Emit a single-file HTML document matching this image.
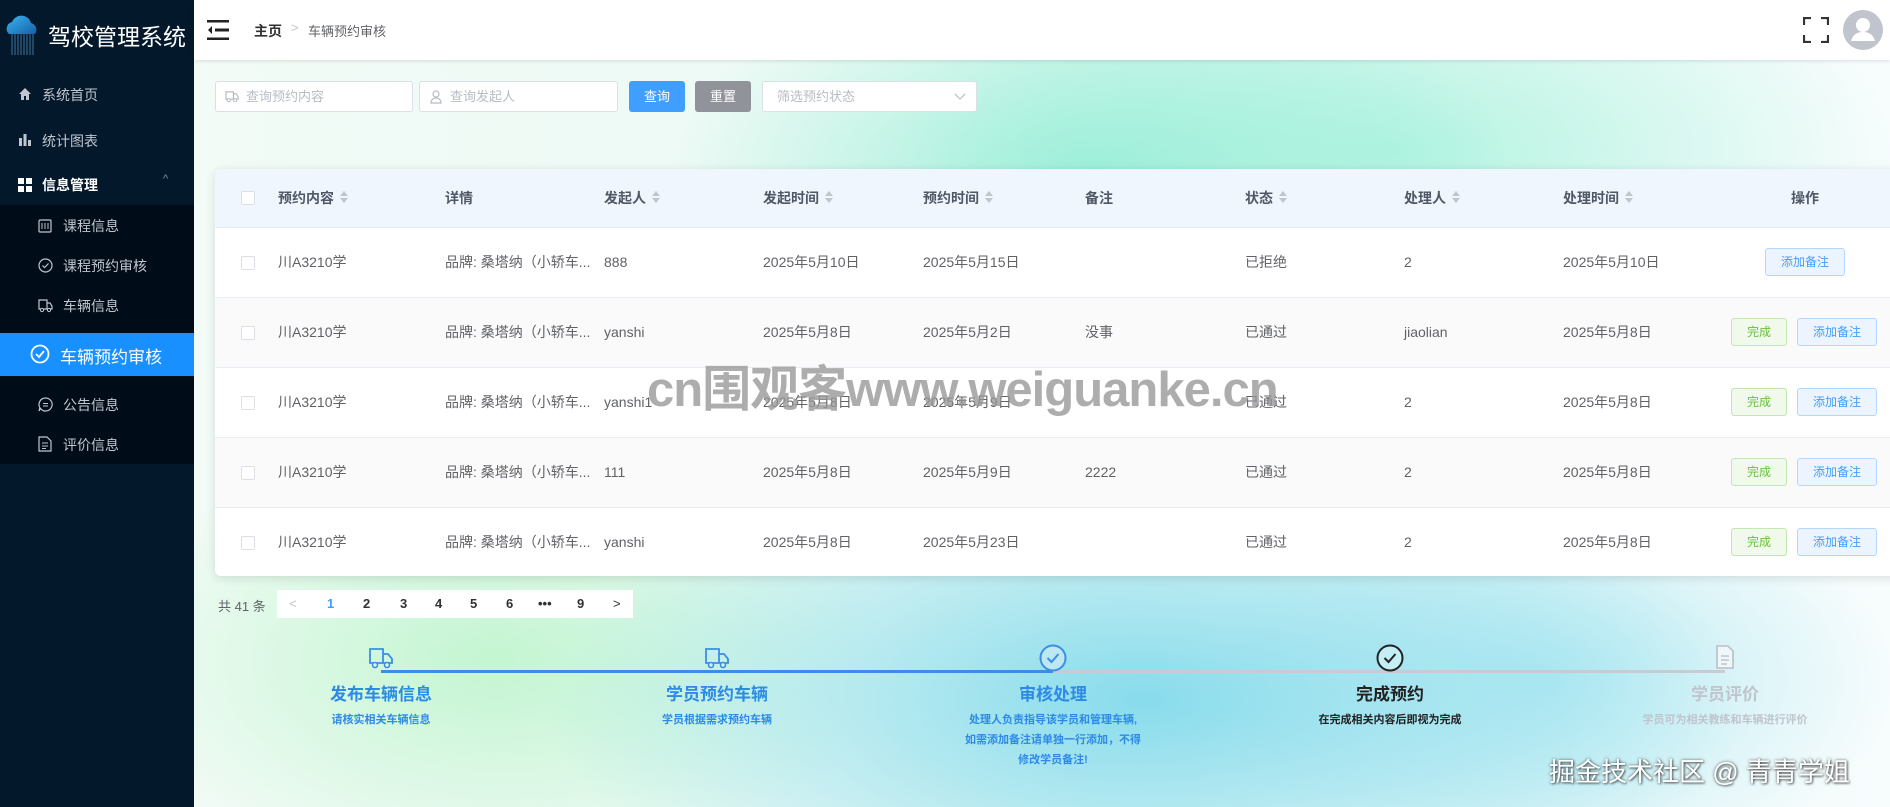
<!DOCTYPE html>
<html><head><meta charset="utf-8">
<style>
*{box-sizing:border-box;margin:0;padding:0}
body{width:1890px;height:807px;overflow:hidden;font-family:"Liberation Sans","Noto Sans CJK SC",sans-serif;position:relative;background:#fff;color:#606266}
.side{position:absolute;left:0;top:0;width:194px;height:807px;background:#04182b}
.logo{position:absolute;left:48px;top:18px;color:#fff;font-size:23px;letter-spacing:0px}
.mi{position:absolute;left:0;width:194px;color:#c0c6cf;font-size:14px}
.mi svg{position:absolute}
.sub{position:absolute;left:0;top:205px;width:194px;height:259px;background:#000c17}
.act{position:absolute;left:0;top:333px;width:194px;height:43px;background:#1890ff}
.hdr{position:absolute;left:194px;top:0;width:1696px;height:60px;background:#fff;box-shadow:0 1px 4px rgba(0,0,0,.12);z-index:2}
.main{position:absolute;left:194px;top:60px;width:1696px;height:747px;
background:
radial-gradient(ellipse 420px 200px at 900px 110px,rgba(150,238,215,.9),rgba(150,238,215,0) 100%),
radial-gradient(ellipse 500px 220px at 1200px 90px,rgba(165,242,220,.8),rgba(165,242,220,0) 100%),
radial-gradient(ellipse 600px 260px at 950px 640px,rgba(130,218,236,.95),rgba(130,218,236,0) 100%),
radial-gradient(ellipse 400px 220px at 300px 600px,rgba(190,245,205,.9),rgba(190,245,205,0) 100%),
radial-gradient(ellipse 350px 200px at 1350px 620px,rgba(160,228,240,.7),rgba(160,228,240,0) 100%),
linear-gradient(90deg,#f2fbf6,#eaf9f4 50%,#f7fcfd)}
.inp{position:absolute;top:81px;height:31px;background:#fff;border:1px solid #dcdfe6;border-radius:3px;font-size:13px;color:#b8bcc4;line-height:29px}
.btn{position:absolute;top:81px;height:31px;border-radius:3px;color:#fff;font-size:13px;text-align:center;line-height:31px}
.card{position:absolute;left:215px;top:169px;width:1690px;height:407px;background:#fff;border-radius:6px;box-shadow:0 2px 10px rgba(0,0,0,.12);overflow:hidden}
.th{position:absolute;left:0;top:0;width:100%;height:59px;background:#eff6fe;border-bottom:1px solid #e6ebf2}
.row{position:absolute;left:0;width:100%;height:70px;border-bottom:1px solid #ebeef5}
.c{position:absolute;font-size:14px;white-space:nowrap;line-height:20px;height:20px}
.th .c{top:19px;color:#505866;font-weight:bold;font-size:14px}
.row .c{top:24px;color:#606266}
.cb{position:absolute;left:26px;width:14px;height:14px;border:1px solid #dcdfe6;border-radius:2px;background:#fff}
.sort{display:inline-block;vertical-align:middle;margin-left:6px;width:8px;height:12px;position:relative;top:-2px}
.sort:before{content:"";position:absolute;left:0;top:0;border:4px solid transparent;border-bottom:5px solid #c0c4cc;border-top:0}
.sort:after{content:"";position:absolute;left:0;top:7px;border:4px solid transparent;border-top:5px solid #c0c4cc;border-bottom:0}
.b1,.b2{position:absolute;top:20px;height:28px;border-radius:3px;font-size:12px;line-height:26px;text-align:center}
.b1{background:#f0f9eb;border:1px solid #c2e7b0;color:#67c23a;width:56px}
.b2{background:#ecf5ff;border:1px solid #b3d8ff;color:#409eff;width:80px}
.pg{position:absolute;left:277px;top:590px;width:356px;height:28px;background:#fff}
.pg span{position:absolute;top:6px;font-size:13px;font-weight:bold;color:#303133}
.st{position:absolute;text-align:center;width:300px}
.st .t{font-size:17px;font-weight:bold}
.st .d{font-size:11px;font-weight:bold;line-height:20px;margin-top:5px}
</style></head><body>
<div class="side">
 <svg style="position:absolute;left:3px;top:12px" width="38" height="44" viewBox="0 0 38 44"><defs><linearGradient id="g" x1="0" y1="0" x2="1" y2="1"><stop offset="0" stop-color="#3ab4f0"/><stop offset="1" stop-color="#1560a8"/></linearGradient></defs><path d="M6 22a7 7 0 0 1 3-12 10 10 0 0 1 19 1 7 7 0 0 1 4 11z" fill="url(#g)"/><g stroke="#4a8ab8" stroke-width="1" opacity=".8"><path d="M9 22v21M12 22v21M15 22v21M18 22v21M21 22v21M24 22v21M27 22v21M30 22v21"/></g></svg>
 <div class="logo">驾校管理系统</div>
 <div class="sub"></div>
 <div class="act"></div>
 <div class="mi" style="top:85px"><svg style="left:18px;top:2px" width="14" height="14" viewBox="0 0 14 14"><path d="M7 1L1 7h2v6h3V9h2v4h3V7h2z" fill="#c0c6cf"/></svg><span style="position:absolute;left:42px">系统首页</span></div>
 <div class="mi" style="top:131px"><svg style="left:18px;top:2px" width="14" height="14" viewBox="0 0 14 14"><path d="M1 5h3v8H1zM5.5 1h3v12h-3zM10 7h3v6h-3z" fill="#c0c6cf"/></svg><span style="position:absolute;left:42px">统计图表</span></div>
 <div class="mi" style="top:175px;color:#fff"><svg style="left:18px;top:3px" width="14" height="14" viewBox="0 0 14 14"><path d="M0 0h6v6H0zM8 0h6v6H8zM0 8h6v6H0zM8 8h6v6H8z" fill="#fff"/></svg><span style="position:absolute;left:42px;font-weight:bold">信息管理</span><span style="position:absolute;left:163px;top:-2px;font-size:11px;color:#8a93a0">^</span></div>
 <div class="mi" style="top:216px"><svg style="left:38px;top:3px" width="14" height="14" viewBox="0 0 14 14"><rect x="1" y="1" width="12" height="12" rx="1" fill="none" stroke="#c0c6cf" stroke-width="1.2"/><path d="M4 4v6M7 4v6M10 4v6" stroke="#c0c6cf"/></svg><span style="position:absolute;left:63px">课程信息</span></div>
 <div class="mi" style="top:256px"><svg style="left:38px;top:2px" width="15" height="15" viewBox="0 0 15 15"><circle cx="7.5" cy="7.5" r="6.5" fill="none" stroke="#c0c6cf" stroke-width="1.2"/><path d="M4.5 7.5l2 2 4-4" fill="none" stroke="#c0c6cf" stroke-width="1.2"/></svg><span style="position:absolute;left:63px">课程预约审核</span></div>
 <div class="mi" style="top:296px"><svg style="left:38px;top:2px" width="15" height="15" viewBox="0 0 15 15"><path d="M1 2h8v9H1zM9 5h3l2 3v3H9" fill="none" stroke="#c0c6cf" stroke-width="1.2"/><circle cx="4" cy="12" r="1.6" fill="#000c17" stroke="#c0c6cf"/><circle cx="11" cy="12" r="1.6" fill="#000c17" stroke="#c0c6cf"/></svg><span style="position:absolute;left:63px">车辆信息</span></div>
 <div class="mi" style="top:343px;color:#fff;font-size:17px"><svg style="left:30px;top:1px" width="20" height="20" viewBox="0 0 20 20"><circle cx="10" cy="10" r="8.5" fill="none" stroke="#fff" stroke-width="1.8"/><path d="M6 10l3 3 5-6" fill="none" stroke="#fff" stroke-width="1.8"/></svg><span style="position:absolute;left:60px">车辆预约审核</span></div>
 <div class="mi" style="top:395px"><svg style="left:38px;top:2px" width="15" height="15" viewBox="0 0 15 15"><path d="M7.5 1a6.5 6.5 0 1 1-5 10.5L1 14l.8-3.4A6.5 6.5 0 0 1 7.5 1z" fill="none" stroke="#c0c6cf" stroke-width="1.2"/><path d="M5 6.5h5M5 9h5" stroke="#c0c6cf"/></svg><span style="position:absolute;left:63px">公告信息</span></div>
 <div class="mi" style="top:435px"><svg style="left:38px;top:1px" width="14" height="16" viewBox="0 0 14 16"><path d="M1 1h8l4 4v10H1z" fill="none" stroke="#c0c6cf" stroke-width="1.2"/><path d="M4 7h6M4 10h6M4 12.5h4" stroke="#c0c6cf"/></svg><span style="position:absolute;left:63px">评价信息</span></div>
</div>
<div class="hdr">
 <svg style="position:absolute;left:13px;top:20px" width="22" height="20" viewBox="0 0 22 20"><path d="M0 1h22M8 10h14M0 19h22" stroke="#222" stroke-width="3"/><path d="M5 6l-4 4 4 4z" fill="#222"/></svg>
 <span style="position:absolute;left:60px;top:21px;font-size:14px;font-weight:bold;color:#303133">主页</span>
 <span style="position:absolute;left:97px;top:20px;font-size:13px;color:#c0c4cc">&gt;</span>
 <span style="position:absolute;left:114px;top:21px;font-size:13px;color:#606266">车辆预约审核</span>
 <svg style="position:absolute;left:1609px;top:17px" width="26" height="26" viewBox="0 0 26 26" fill="none" stroke="#333" stroke-width="2.2"><path d="M1 8V1h7M18 1h7v7M25 18v7h-7M8 25H1v-7"/></svg>
 <svg style="position:absolute;left:1648px;top:9px" width="42" height="42" viewBox="0 0 42 42"><circle cx="21" cy="21" r="20" fill="#c0c4cc"/><circle cx="21" cy="16" r="7" fill="#fff"/><path d="M9 32c2-7 7-9 12-9s10 2 12 9z" fill="#fff"/></svg>
</div>
<div class="main"></div>
<div class="inp" style="left:215px;width:198px"><svg style="position:absolute;left:9px;top:8px" width="14" height="13" viewBox="0 0 15 14"><path d="M1 2h8v8H1zM9 4h3l2 3v3H9" fill="none" stroke="#b8bcc4" stroke-width="1.3"/><circle cx="4" cy="11" r="1.7" fill="#fff" stroke="#b8bcc4"/><circle cx="11" cy="11" r="1.7" fill="#fff" stroke="#b8bcc4"/></svg><span style="position:absolute;left:30px">查询预约内容</span></div>
<div class="inp" style="left:419px;width:199px"><svg style="position:absolute;left:10px;top:8px" width="12" height="14" viewBox="0 0 12 14"><circle cx="6" cy="4" r="3" fill="none" stroke="#b8bcc4" stroke-width="1.2"/><path d="M1 13c0-3 2-5 5-5s5 2 5 5z" fill="none" stroke="#b8bcc4" stroke-width="1.2"/></svg><span style="position:absolute;left:30px">查询发起人</span></div>
<div class="btn" style="left:629px;width:56px;background:#409eff">查询</div>
<div class="btn" style="left:695px;width:56px;background:#909399">重置</div>
<div class="inp" style="left:762px;width:215px"><span style="position:absolute;left:14px">筛选预约状态</span><svg style="position:absolute;right:10px;top:11px" width="12" height="8" viewBox="0 0 12 8"><path d="M1 1l5 5 5-5" fill="none" stroke="#c0c4cc" stroke-width="1.3"/></svg></div>

<div class="card">
 <div class="th"><div class="cb" style="top:22px"></div>
  <div class="c" style="left:63px">预约内容<i class="sort"></i></div>
  <div class="c" style="left:230px">详情</div>
  <div class="c" style="left:389px">发起人<i class="sort"></i></div>
  <div class="c" style="left:548px">发起时间<i class="sort"></i></div>
  <div class="c" style="left:708px">预约时间<i class="sort"></i></div>
  <div class="c" style="left:870px">备注</div>
  <div class="c" style="left:1030px">状态<i class="sort"></i></div>
  <div class="c" style="left:1189px">处理人<i class="sort"></i></div>
  <div class="c" style="left:1348px">处理时间<i class="sort"></i></div>
  <div class="c" style="left:1576px">操作</div>
 </div>
 <div class="row" style="top:59px;background:#fff"><div class="cb" style="top:28px"></div>
  <div class="c" style="left:63px">川A3210学</div><div class="c" style="left:230px">品牌: 桑塔纳（小轿车...</div><div class="c" style="left:389px">888</div><div class="c" style="left:548px">2025年5月10日</div><div class="c" style="left:708px">2025年5月15日</div><div class="c" style="left:870px"></div><div class="c" style="left:1030px">已拒绝</div><div class="c" style="left:1189px">2</div><div class="c" style="left:1348px">2025年5月10日</div>
  <div class="b2" style="left:1550px">添加备注</div></div>
 <div class="row" style="top:129px;background:#fafafa"><div class="cb" style="top:28px"></div>
  <div class="c" style="left:63px">川A3210学</div><div class="c" style="left:230px">品牌: 桑塔纳（小轿车...</div><div class="c" style="left:389px">yanshi</div><div class="c" style="left:548px">2025年5月8日</div><div class="c" style="left:708px">2025年5月2日</div><div class="c" style="left:870px">没事</div><div class="c" style="left:1030px">已通过</div><div class="c" style="left:1189px">jiaolian</div><div class="c" style="left:1348px">2025年5月8日</div>
  <div class="b1" style="left:1516px">完成</div><div class="b2" style="left:1582px">添加备注</div></div>
 <div class="row" style="top:199px;background:#fff"><div class="cb" style="top:28px"></div>
  <div class="c" style="left:63px">川A3210学</div><div class="c" style="left:230px">品牌: 桑塔纳（小轿车...</div><div class="c" style="left:389px">yanshi1</div><div class="c" style="left:548px">2025年5月8日</div><div class="c" style="left:708px">2025年5月9日</div><div class="c" style="left:870px"></div><div class="c" style="left:1030px">已通过</div><div class="c" style="left:1189px">2</div><div class="c" style="left:1348px">2025年5月8日</div>
  <div class="b1" style="left:1516px">完成</div><div class="b2" style="left:1582px">添加备注</div></div>
 <div class="row" style="top:269px;background:#fafafa"><div class="cb" style="top:28px"></div>
  <div class="c" style="left:63px">川A3210学</div><div class="c" style="left:230px">品牌: 桑塔纳（小轿车...</div><div class="c" style="left:389px">111</div><div class="c" style="left:548px">2025年5月8日</div><div class="c" style="left:708px">2025年5月9日</div><div class="c" style="left:870px">2222</div><div class="c" style="left:1030px">已通过</div><div class="c" style="left:1189px">2</div><div class="c" style="left:1348px">2025年5月8日</div>
  <div class="b1" style="left:1516px">完成</div><div class="b2" style="left:1582px">添加备注</div></div>
 <div class="row" style="top:339px;background:#fff;border:0"><div class="cb" style="top:28px"></div>
  <div class="c" style="left:63px">川A3210学</div><div class="c" style="left:230px">品牌: 桑塔纳（小轿车...</div><div class="c" style="left:389px">yanshi</div><div class="c" style="left:548px">2025年5月8日</div><div class="c" style="left:708px">2025年5月23日</div><div class="c" style="left:870px"></div><div class="c" style="left:1030px">已通过</div><div class="c" style="left:1189px">2</div><div class="c" style="left:1348px">2025年5月8日</div>
  <div class="b1" style="left:1516px">完成</div><div class="b2" style="left:1582px">添加备注</div></div>
</div>
<div style="position:absolute;left:647px;top:360px;font-size:49px;line-height:60px;font-weight:bold;color:rgba(150,150,150,.78);letter-spacing:-1px;white-space:nowrap">cn围观客www.weiguanke.cn</div>

<div style="position:absolute;left:218px;top:596px;font-size:13px;color:#606266">共 41 条</div>
<div class="pg">
 <span style="left:12px;color:#c0c4cc;font-weight:normal">&lt;</span>
 <span style="left:50px;color:#409eff">1</span><span style="left:86px">2</span><span style="left:123px">3</span><span style="left:158px">4</span><span style="left:193px">5</span><span style="left:229px">6</span><span style="left:261px">•••</span><span style="left:300px">9</span>
 <span style="left:336px;font-weight:normal">&gt;</span>
</div>

<div style="position:absolute;left:381px;top:670px;width:672px;height:3px;background:#3a8ee6"></div>
<div style="position:absolute;left:1053px;top:670px;width:672px;height:3px;background:#c8ccd2"></div>
<svg style="position:absolute;left:368px;top:646px" width="26" height="24" viewBox="0 0 26 24"><path d="M2 3h13v14H2zM15 8h5l4 5v4h-9" fill="none" stroke="#3a8ee6" stroke-width="1.8"/><circle cx="7" cy="19" r="2.5" fill="#e6f8f0" stroke="#3a8ee6" stroke-width="1.6"/><circle cx="19" cy="19" r="2.5" fill="#e6f8f0" stroke="#3a8ee6" stroke-width="1.6"/></svg>
<svg style="position:absolute;left:704px;top:646px" width="26" height="24" viewBox="0 0 26 24"><path d="M2 3h13v14H2zM15 8h5l4 5v4h-9" fill="none" stroke="#3a8ee6" stroke-width="1.8"/><circle cx="7" cy="19" r="2.5" fill="#d6f4ee" stroke="#3a8ee6" stroke-width="1.6"/><circle cx="19" cy="19" r="2.5" fill="#d6f4ee" stroke="#3a8ee6" stroke-width="1.6"/></svg>
<svg style="position:absolute;left:1039px;top:644px" width="28" height="28" viewBox="0 0 28 28"><circle cx="14" cy="14" r="12.5" fill="#bde8f2" stroke="#3a8ee6" stroke-width="2"/><path d="M8.5 14l4 4 7-8" fill="none" stroke="#3a8ee6" stroke-width="2"/></svg>
<svg style="position:absolute;left:1376px;top:644px" width="28" height="28" viewBox="0 0 28 28"><circle cx="14" cy="14" r="12.5" fill="#c4eef4" stroke="#222" stroke-width="2"/><path d="M8.5 14l4 4 7-8" fill="none" stroke="#222" stroke-width="2"/></svg>
<svg style="position:absolute;left:1715px;top:644px" width="20" height="26" viewBox="0 0 20 26"><path d="M2 2h11l5 5v17H2z" fill="#eef8fa" stroke="#c0c4cc" stroke-width="1.8"/><path d="M6 12h8M6 16h8M6 20h6" stroke="#c0c4cc" stroke-width="1.6"/></svg>
<div class="st" style="left:231px;top:680px;color:#2d8ae6"><div class="t">发布车辆信息</div><div class="d">请核实相关车辆信息</div></div>
<div class="st" style="left:567px;top:680px;color:#2d8ae6"><div class="t">学员预约车辆</div><div class="d">学员根据需求预约车辆</div></div>
<div class="st" style="left:903px;top:680px;color:#2d8ae6"><div class="t">审核处理</div><div class="d">处理人负责指导该学员和管理车辆,<br>如需添加备注请单独一行添加，不得<br>修改学员备注!</div></div>
<div class="st" style="left:1240px;top:680px;color:#222"><div class="t">完成预约</div><div class="d">在完成相关内容后即视为完成</div></div>
<div class="st" style="left:1575px;top:680px;color:#c0c4cc"><div class="t">学员评价</div><div class="d">学员可为相关教练和车辆进行评价</div></div>
<div style="position:absolute;left:1549px;top:752px;font-size:26px;color:#fff;text-shadow:0 0 3px rgba(0,0,0,.6),1px 1px 2px rgba(0,0,0,.5);white-space:nowrap">掘金技术社区 @ 青青学姐</div>
</body></html>
